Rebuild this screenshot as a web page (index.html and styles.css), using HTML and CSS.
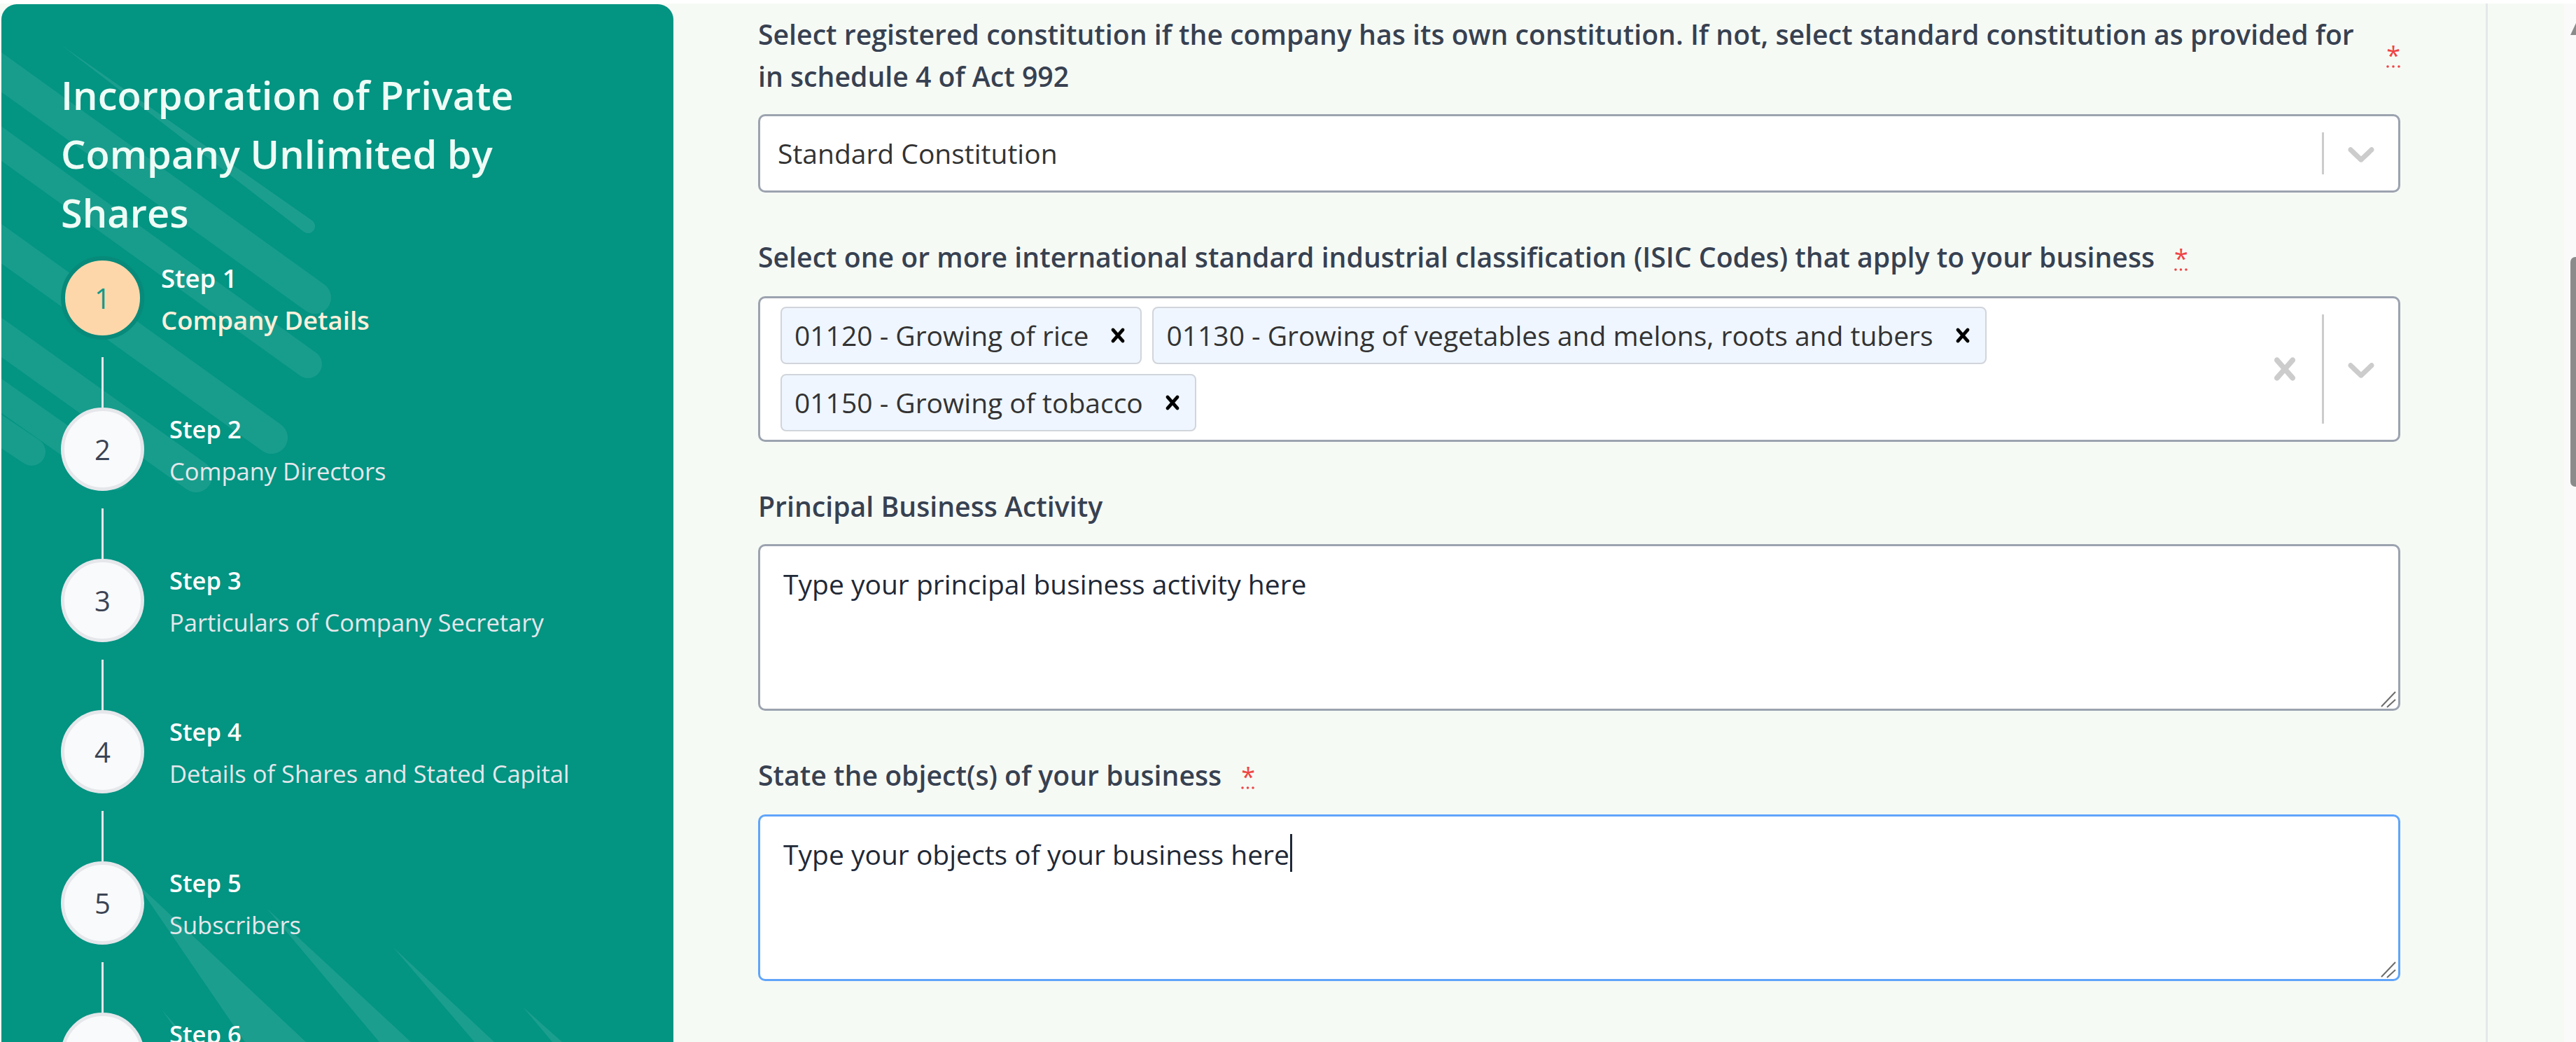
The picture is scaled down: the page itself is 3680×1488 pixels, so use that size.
FILE: index.html
```html
<!DOCTYPE html>
<html lang="en">
<head>
<meta charset="utf-8">
<title>Incorporation of Private Company Unlimited by Shares</title>
<link rel="stylesheet" href="styles.css">
</head>
<body>
<div class="app">
  <aside class="sidebar">
    <svg class="deco" viewBox="0 0 960 1482" aria-hidden="true">
      <g class="deco-bands">
        <line x1="-60" y1="54" x2="448" y2="419" stroke-width="46"/>
        <line x1="-60" y1="156" x2="438" y2="514" stroke-width="40"/>
        <line x1="-60" y1="299" x2="386" y2="619" stroke-width="46"/>
        <line x1="-60" y1="433" x2="278" y2="674" stroke-width="46"/>
        <line x1="-60" y1="517" x2="163" y2="674" stroke-width="40"/>
        <line x1="-60" y1="570" x2="43" y2="639" stroke-width="40"/>
      </g>
      <g class="deco-wedges">
        <path d="M85 58 L444 309 A10 10 0 0 1 432 325 Z"/>
        <path d="M192 1254 L435 1482 L348 1482 Z"/>
        <path d="M379 1291 L585 1482 L540 1482 Z"/>
        <path d="M560 1347 L704 1482 L676 1482 Z"/>
        <path d="M745 1432 L801 1482 L787 1482 Z"/>
        <path d="M229 1436 L270 1482 L262 1482 Z"/>
      </g>
    </svg>
    <div class="sidebar-inner">
      <h1 class="sidebar-title">Incorporation of Private Company Unlimited by Shares</h1>
      <ol class="steps">
        <li class="step step-active">
          <div class="step-marker"><span class="step-circle">1</span><span class="step-line"></span></div>
          <div class="step-text"><span class="step-label">Step 1</span><span class="step-desc">Company Details</span></div>
        </li>
        <li class="step">
          <div class="step-marker"><span class="step-circle">2</span><span class="step-line"></span></div>
          <div class="step-text"><span class="step-label">Step 2</span><span class="step-desc">Company Directors</span></div>
        </li>
        <li class="step">
          <div class="step-marker"><span class="step-circle">3</span><span class="step-line"></span></div>
          <div class="step-text"><span class="step-label">Step 3</span><span class="step-desc">Particulars of Company Secretary</span></div>
        </li>
        <li class="step">
          <div class="step-marker"><span class="step-circle">4</span><span class="step-line"></span></div>
          <div class="step-text"><span class="step-label">Step 4</span><span class="step-desc">Details of Shares and Stated Capital</span></div>
        </li>
        <li class="step">
          <div class="step-marker"><span class="step-circle">5</span><span class="step-line"></span></div>
          <div class="step-text"><span class="step-label">Step 5</span><span class="step-desc">Subscribers</span></div>
        </li>
        <li class="step">
          <div class="step-marker"><span class="step-circle">6</span></div>
          <div class="step-text"><span class="step-label">Step 6</span></div>
        </li>
      </ol>
    </div>
  </aside>

  <main class="main">
    <form class="form">
      <div class="field">
        <div class="label label-split">
          <span class="label-text">Select registered constitution if the company has its own constitution. If not, select standard constitution as provided for in schedule 4 of Act 992</span>
          <abbr class="req" title="required">*</abbr>
        </div>
        <div class="select">
          <div class="select-value"><span class="single-value">Standard Constitution</span></div>
          <div class="indicators">
            <span class="indicator-sep"></span>
            <span class="indicator">
              <svg viewBox="0 0 20 20" aria-hidden="true"><path d="M4.516 7.548c0.436-0.446 1.043-0.481 1.576 0l3.908 3.747 3.908-3.747c0.533-0.481 1.141-0.446 1.574 0 0.436 0.445 0.408 1.197 0 1.615-0.406 0.418-4.695 4.502-4.695 4.502-0.217 0.223-0.502 0.335-0.787 0.335s-0.57-0.112-0.789-0.335c0 0-4.287-4.084-4.695-4.502s-0.436-1.17 0-1.615z"/></svg>
            </span>
          </div>
        </div>
      </div>

      <div class="field">
        <div class="label">Select one or more international standard industrial classification (ISIC Codes) that apply to your business<abbr class="req req-inline" title="required">*</abbr></div>
        <div class="select select-multi">
          <div class="multi-values">
            <span class="chip"><span class="chip-label">01120 - Growing of rice</span><svg class="chip-remove" viewBox="0 0 20 20" aria-hidden="true"><path d="M14.348 14.849c-0.469 0.469-1.229 0.469-1.697 0l-2.651-3.030-2.651 3.029c-0.469 0.469-1.229 0.469-1.697 0-0.469-0.469-0.469-1.229 0-1.697l2.758-3.15-2.759-3.152c-0.469-0.469-0.469-1.228 0-1.697s1.228-0.469 1.697 0l2.652 3.031 2.651-3.031c0.469-0.469 1.228-0.469 1.697 0s0.469 1.229 0 1.697l-2.758 3.152 2.758 3.15c0.469 0.469 0.469 1.229 0 1.698z"/></svg></span>
            <span class="chip"><span class="chip-label">01130 - Growing of vegetables and melons, roots and tubers</span><svg class="chip-remove" viewBox="0 0 20 20" aria-hidden="true"><path d="M14.348 14.849c-0.469 0.469-1.229 0.469-1.697 0l-2.651-3.030-2.651 3.029c-0.469 0.469-1.229 0.469-1.697 0-0.469-0.469-0.469-1.229 0-1.697l2.758-3.15-2.759-3.152c-0.469-0.469-0.469-1.228 0-1.697s1.228-0.469 1.697 0l2.652 3.031 2.651-3.031c0.469-0.469 1.228-0.469 1.697 0s0.469 1.229 0 1.697l-2.758 3.152 2.758 3.15c0.469 0.469 0.469 1.229 0 1.698z"/></svg></span>
            <span class="chip"><span class="chip-label">01150 - Growing of tobacco</span><svg class="chip-remove" viewBox="0 0 20 20" aria-hidden="true"><path d="M14.348 14.849c-0.469 0.469-1.229 0.469-1.697 0l-2.651-3.030-2.651 3.029c-0.469 0.469-1.229 0.469-1.697 0-0.469-0.469-0.469-1.229 0-1.697l2.758-3.15-2.759-3.152c-0.469-0.469-0.469-1.228 0-1.697s1.228-0.469 1.697 0l2.652 3.031 2.651-3.031c0.469-0.469 1.228-0.469 1.697 0s0.469 1.229 0 1.697l-2.758 3.152 2.758 3.15c0.469 0.469 0.469 1.229 0 1.698z"/></svg></span>
          </div>
          <div class="indicators">
            <span class="indicator">
              <svg viewBox="0 0 20 20" aria-hidden="true"><path d="M14.348 14.849c-0.469 0.469-1.229 0.469-1.697 0l-2.651-3.030-2.651 3.029c-0.469 0.469-1.229 0.469-1.697 0-0.469-0.469-0.469-1.229 0-1.697l2.758-3.15-2.759-3.152c-0.469-0.469-0.469-1.228 0-1.697s1.228-0.469 1.697 0l2.652 3.031 2.651-3.031c0.469-0.469 1.228-0.469 1.697 0s0.469 1.229 0 1.697l-2.758 3.152 2.758 3.15c0.469 0.469 0.469 1.229 0 1.698z"/></svg>
            </span>
            <span class="indicator-sep"></span>
            <span class="indicator">
              <svg viewBox="0 0 20 20" aria-hidden="true"><path d="M4.516 7.548c0.436-0.446 1.043-0.481 1.576 0l3.908 3.747 3.908-3.747c0.533-0.481 1.141-0.446 1.574 0 0.436 0.445 0.408 1.197 0 1.615-0.406 0.418-4.695 4.502-4.695 4.502-0.217 0.223-0.502 0.335-0.787 0.335s-0.57-0.112-0.789-0.335c0 0-4.287-4.084-4.695-4.502s-0.436-1.17 0-1.615z"/></svg>
            </span>
          </div>
        </div>
      </div>

      <div class="field">
        <label class="label" for="activity">Principal Business Activity</label>
        <div class="ta-wrap">
          <textarea id="activity" class="textarea" placeholder="Type your principal business activity here"></textarea>
          <svg class="grip" viewBox="0 0 24 24" aria-hidden="true"><line x1="1" y1="22" x2="21" y2="1"/><line x1="9" y1="23" x2="21" y2="12"/></svg>
        </div>
      </div>

      <div class="field">
        <label class="label" for="objects">State the object(s) of your business<abbr class="req req-inline" title="required">*</abbr></label>
        <div class="ta-wrap">
          <textarea id="objects" class="textarea textarea-focus">Type your objects of your business here</textarea>
          <div class="ta-mirror" aria-hidden="true">Type your objects of your business here<span class="caret"></span></div>
          <svg class="grip" viewBox="0 0 24 24" aria-hidden="true"><line x1="1" y1="22" x2="21" y2="1"/><line x1="9" y1="23" x2="21" y2="12"/></svg>
        </div>
      </div>
    </form>
  </main>

  <div class="gutter"></div>
  <div class="scrollbar" aria-hidden="true">
    <svg class="scroll-arrow" viewBox="0 0 8 17"><polygon points="0,17 8,0 8,17"/></svg>
    <div class="scroll-thumb"></div>
  </div>
</div>
</body>
</html>
```

FILE: styles.css
```css
* {
  box-sizing: border-box;
}

html,
body {
  margin: 0;
  height: 100%;
  overflow: hidden;
}

body {
  background: #ffffff;
  font-family: "Open Sans", "Noto Sans", sans-serif;
}

.app {
  display: flex;
  height: 1483px;
  margin-top: 5px;
  background: #f6faf5;
  overflow: hidden;
}

/* ---------- Sidebar ---------- */
.sidebar {
  position: relative;
  flex: 0 0 960px;
  margin: 1px 0 0 2px;
  background: #039482;
  border-radius: 22px 22px 0 0;
  overflow: hidden;
}

.deco {
  position: absolute;
  left: 0;
  top: 0;
  width: 960px;
  height: 1482px;
}

.deco-bands line {
  stroke: #ffffff;
  stroke-opacity: 0.085;
  stroke-linecap: round;
}

.deco-wedges path {
  fill: #ffffff;
  fill-opacity: 0.1;
}

.sidebar-inner {
  position: relative;
  padding: 87px 0 0 85px;
}

.sidebar-title {
  margin: 0 0 21px;
  width: 760px;
  font-size: 56px;
  font-weight: 600;
  line-height: 84px;
  color: #effcf6;
}

.steps {
  list-style: none;
  margin: 0;
  padding: 0;
}

.step {
  display: flex;
  align-items: flex-start;
}

.step-marker {
  flex: 0 0 119px;
  display: flex;
  flex-direction: column;
  align-items: center;
}

.step-circle {
  width: 119px;
  height: 119px;
  border-radius: 50%;
  border: 5px solid #e5e7eb;
  background: #f9fafb;
  display: flex;
  align-items: center;
  justify-content: center;
  font-size: 40px;
  line-height: 1;
  color: #3b4454;
}

.step-active .step-circle {
  border: 6px solid #078a7a;
  background: #fdd7aa;
  color: #12998a;
}

.step-line {
  width: 3px;
  height: 72px;
  margin-top: 25px;
  background: #e5e7eb;
}

.step-text {
  display: flex;
  flex-direction: column;
  margin-left: 36px;
  padding-top: 1px;
  font-size: 34.5px;
  line-height: 60px;
}

.step-active .step-text {
  margin-left: 24px;
  font-size: 36.5px;
}

.step-label {
  font-weight: 600;
  color: #ffffff;
}

.step-desc {
  color: #e5e7eb;
}

.step-active .step-desc {
  font-weight: 600;
  color: #fdf0da;
}

/* ---------- Main form ---------- */
.main {
  flex: 0 0 2592px;
  border-right: 3px solid #e5e7eb;
  padding: 14px 122px 0 121px;
}

.form {
  display: flex;
  flex-direction: column;
  gap: 62px;
}

.field {
  display: flex;
  flex-direction: column;
  gap: 24px;
}

.label {
  display: block;
  font-size: 39.2px;
  font-weight: 600;
  line-height: 60px;
  color: #374151;
}

.label-split {
  display: flex;
  align-items: center;
  gap: 37px;
}

.label-text {
  flex: 1 1 auto;
}

.req {
  font-size: 36px;
  font-weight: 400;
  color: #ef4444;
  text-decoration: underline dotted;
  cursor: help;
}

.req-inline {
  margin-left: 28px;
}

.select {
  display: flex;
  align-items: stretch;
  height: 112px;
  background: #ffffff;
  border: 3px solid #9ca3af;
  border-radius: 10px;
}

.select-value {
  flex: 1 1 auto;
  display: flex;
  align-items: center;
  padding-left: 25px;
  font-size: 39px;
  line-height: 60px;
  color: #333333;
}

.indicators {
  display: flex;
  align-items: stretch;
}

.indicator-sep {
  width: 3px;
  margin: 23px 0;
  background: #cccccc;
}

.indicator {
  display: flex;
  align-items: center;
  padding: 0 21px;
  color: #cccccc;
}

.indicator svg {
  display: block;
  width: 64px;
  height: 64px;
  fill: currentColor;
}

.select-multi {
  height: auto;
}

.multi-values {
  flex: 1 1 auto;
  display: flex;
  flex-wrap: wrap;
  align-content: flex-start;
  gap: 14px 15px;
  padding: 12px 0 12px 29px;
}

.chip {
  display: flex;
  align-items: center;
  padding: 9px 12px 9px 18px;
  background: #eff6ff;
  border: 2px solid #d1d5db;
  border-radius: 8px;
  font-size: 39px;
  line-height: 60px;
  color: #333333;
}

.chip-remove {
  display: block;
  width: 40px;
  height: 40px;
  margin-left: 22px;
  fill: #000000;
}

.ta-wrap {
  position: relative;
}

.textarea {
  display: block;
  width: 100%;
  height: 238px;
  margin: 0;
  padding: 24px 33px;
  background: #ffffff;
  border: 3px solid #9ca3af;
  border-radius: 10px;
  font-family: "Open Sans", "Noto Sans", sans-serif;
  font-size: 39px;
  line-height: 60px;
  color: #1f2937;
  resize: none;
  outline: none;
  overflow: hidden;
}

.textarea::placeholder {
  color: #1f2937;
  opacity: 1;
}

.textarea-focus {
  border-color: #60a5fa;
}

.ta-mirror {
  position: absolute;
  inset: 0;
  padding: 24px 33px;
  border: 3px solid transparent;
  font-size: 39px;
  line-height: 60px;
  color: transparent;
  white-space: pre-wrap;
  pointer-events: none;
}

.caret {
  display: inline-block;
  width: 3px;
  height: 54px;
  margin-left: 1px;
  vertical-align: -10px;
  background: #1f2937;
}

.grip {
  position: absolute;
  right: 4px;
  bottom: 4px;
  width: 24px;
  height: 24px;
  pointer-events: none;
}

.grip line {
  stroke: #6b6b6b;
  stroke-width: 2;
}

/* ---------- Right gutter & scrollbar ---------- */
.gutter {
  flex: 0 0 109px;
}

.scrollbar {
  flex: 0 0 17px;
  display: flex;
  flex-direction: column;
  padding-left: 9px;
  background: #fafafa;
  overflow: hidden;
}

.scroll-arrow {
  display: block;
  width: 8px;
  height: 17px;
  margin-top: 28px;
  fill: #8b8b8b;
}

.scroll-thumb {
  width: 20px;
  height: 328px;
  margin-top: 317px;
  background: #8b8b8b;
  border-radius: 7px 0 0 7px;
}
```
